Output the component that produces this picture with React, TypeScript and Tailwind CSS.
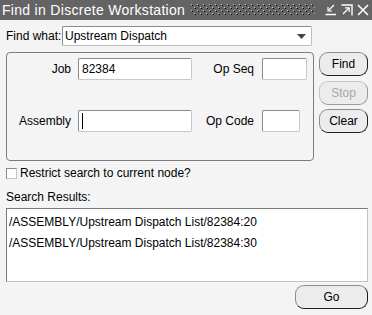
import React from 'react';

const inputCls =
  'h-[22px] bg-white border border-[#8a8a8a] border-b-[#c8c8c8] border-r-[#c8c8c8] rounded-[2px] px-[3px] text-[12px] leading-[20px] text-black';

const btnCls =
  'flex items-center justify-center bg-[#ececec] border border-[#8c8c8c] border-b-[#1e1e1e] border-r-[#1e1e1e] rounded-[9px] text-[12px]';

function DotPattern() {
  return (
    <svg className="flex-1 h-[12px] ml-[6px] mr-[10px]" preserveAspectRatio="none">
      <defs>
        <pattern id="dots" width="6" height="6" patternUnits="userSpaceOnUse">
          <rect x="0" y="0" width="1" height="1" fill="#c4c4c4" />
          <rect x="1" y="1" width="1" height="1" fill="#000" />
          <rect x="3" y="3" width="1" height="1" fill="#c4c4c4" />
          <rect x="4" y="4" width="1" height="1" fill="#000" />
        </pattern>
      </defs>
      <rect width="100%" height="100%" fill="url(#dots)" />
    </svg>
  );
}

function TitleIcons() {
  return (
    <div className="flex items-center gap-[4px] pr-[3px]">
      <svg width="12" height="12" viewBox="0 0 12 12" fill="none" stroke="white" strokeWidth="1.2">
        <path d="M9 1 L3.5 6.5" />
        <path d="M3 3 V7 H7" />
        <path d="M0.5 10.5 H11" strokeWidth="1.5" />
      </svg>
      <svg width="12" height="12" viewBox="0 0 12 12" fill="none" stroke="white" strokeWidth="1.2">
        <path d="M0.5 1 H11 V11.5" strokeWidth="1.4" />
        <path d="M2 10 L8 4" />
        <path d="M4 3.8 H8.2 V8" />
      </svg>
      <svg width="12" height="12" viewBox="0 0 12 12" fill="none" stroke="white" strokeWidth="1.6">
        <path d="M1 1 L11 11 M11 1 L1 11" />
      </svg>
    </div>
  );
}

function FieldRow({
  label,
  value,
  label2,
  w2,
  caret,
}: {
  label: string;
  value: string;
  label2: string;
  w2: string;
  caret?: boolean;
}) {
  return (
    <div className="flex items-center">
      <div className="w-[64px] text-right text-[12px]">{label}</div>
      <div className={`${inputCls} ml-[7px] w-[114px] flex items-center`}>
        {caret && <div className="w-px h-[16px] bg-black" />}
        {value}
      </div>
      <div className="w-[62px] text-right text-[12px]">{label2}</div>
      <div className={`${inputCls} ml-[8px] ${w2}`} />
    </div>
  );
}

export default function App() {
  return (
    <div
      className="w-[372px] h-[315px] bg-[#f4f4f4] text-black overflow-hidden"
      style={{ fontFamily: '"Liberation Sans", Arial, sans-serif' }}
    >
      <div className="h-[20px] bg-[#646464] flex items-center">
        <span className="pl-[2px] text-white text-[14px] tracking-[0.3px] whitespace-nowrap">
          Find in Discrete Workstation
        </span>
        <DotPattern />
        <TitleIcons />
      </div>

      <div className="flex items-center pt-[6px] pl-[6px]">
        <span className="w-[56px] text-[12px]">Find what:</span>
        <div className="w-[250px] h-[20px] bg-white border border-[#8a8a8a] border-b-[#bdbdbd] border-r-[#bdbdbd] rounded-[2px] flex items-center justify-between pl-[2px] pr-[5px]">
          <span className="text-[12px]">Upstream Dispatch</span>
          <svg width="9" height="5" viewBox="0 0 9 5">
            <path d="M0 0 H9 L4.5 5 Z" fill="#444" />
          </svg>
        </div>
      </div>

      <div className="flex mt-[6px] pl-[6px]">
        <div className="w-[308px] h-[109px] border border-[#7c7c7c] rounded-[4px] pt-[5px] flex flex-col gap-[30px]">
          <FieldRow label="Job" value="82384" label2="Op Seq" w2="w-[45px]" />
          <FieldRow label="Assembly" value="" label2="Op Code" w2="w-[38px]" caret />
        </div>
        <div className="ml-[5px] w-[49px] flex flex-col">
          <div className={`${btnCls} h-[24px]`}>Find</div>
          <div className={`${btnCls} h-[24px] mt-[5px] border-[#c4c4c4] border-b-[#9a9a9a] border-r-[#9a9a9a] text-[#a8a8a8]`}>
            Stop
          </div>
          <div className={`${btnCls} h-[24px] mt-[4px]`}>Clear</div>
        </div>
      </div>

      <div className="flex items-center mt-[3px] pl-[6px]">
        <div className="w-[11px] h-[11px] bg-white border border-[#8a8a8a] border-b-[#c4c4c4] border-r-[#c4c4c4]" />
        <span className="ml-[3px] text-[12px]">Restrict search to current node?</span>
      </div>

      <div className="pl-[6px] mt-[8px] text-[12px] leading-[14px]">Search Results:</div>

      <div className="ml-[6px] mt-[4px] w-[362px] h-[74px] bg-white border border-[#7a7a7a] border-b-[#c4c4c4] border-r-[#c4c4c4] pl-[2px] pt-[3px] text-[12px]">
        <div className="h-[21px] leading-[20px]">/ASSEMBLY/Upstream Dispatch List/82384:20</div>
        <div className="h-[21px] leading-[20px]">/ASSEMBLY/Upstream Dispatch List/82384:30</div>
      </div>

      <div className="flex justify-end pr-[4px] mt-[3px]">
        <div className={`${btnCls} w-[73px] h-[24px]`}>Go</div>
      </div>
    </div>
  );
}
